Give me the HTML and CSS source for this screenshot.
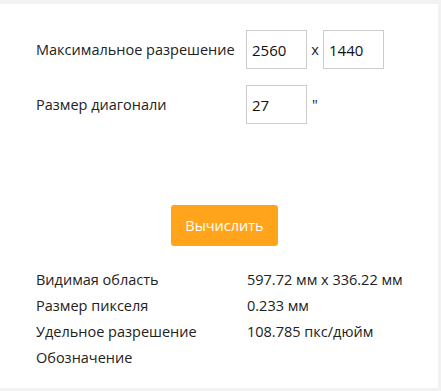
FILE: index.html
```html
<!DOCTYPE html>
<html lang="ru">
<head>
    <meta charset="UTF-8">
    <meta name="viewport" content="width=device-width, initial-scale=1.0">
    <title>Калькулятор разрешения</title>
    <link rel="stylesheet" href="styles.css">
</head>
<body>

    <div id="container">
        <div class="formRow">
            <label class="fieldLabel" for="resWidth">Максимальное разрешение</label>
            <input class="numInput" type="text" id="resWidth" value="2560">
            <span class="sep">x</span>
            <input class="numInput" type="text" id="resHeight" value="1440">
        </div>

        <div class="formRow">
            <label class="fieldLabel" for="diagonal">Размер диагонали</label>
            <input class="numInput" type="text" id="diagonal" value="27">
            <span class="sep">"</span>
        </div>

        <div class="actions">
            <button class="calcButton">Вычислить</button>
        </div>

        <div class="results">
            <div class="resultRow">
                <span class="resultName">Видимая область</span>
                <span class="resultValue">597.72 мм x 336.22 мм</span>
            </div>
            <div class="resultRow">
                <span class="resultName">Размер пикселя</span>
                <span class="resultValue">0.233 мм</span>
            </div>
            <div class="resultRow">
                <span class="resultName">Удельное разрешение</span>
                <span class="resultValue">108.785 пкс/дюйм</span>
            </div>
            <div class="resultRow">
                <span class="resultName">Обозначение</span>
                <span class="resultValue"></span>
            </div>
        </div>
    </div>

</body>
</html>
```

FILE: styles.css
```css
body {
    font-family: 'Open Sans', 'Segoe UI', Tahoma, sans-serif;
    font-size: 14.5px;
    color: #222;
    background-color: #f2f2f2;
    margin: 0;
    padding: 4px 3px 3px 0;
    height: 391px;
    box-sizing: border-box;
}

#container {
    background-color: #fff;
    height: 100%;
    box-sizing: border-box;
    padding: 26px 0 0 36px;
}

.formRow {
    display: flex;
    align-items: center;
    height: 39px;
    margin-bottom: 16px;
}

.fieldLabel {
    width: 210px;
}

.numInput {
    width: 61px;
    height: 39px;
    box-sizing: border-box;
    border: 1px solid #ccc;
    padding: 0 5px;
    font-family: inherit;
    font-size: 15px;
    color: #111;
    outline: none;
}

.sep {
    width: 16px;
    text-align: center;
}

.actions {
    display: flex;
    justify-content: center;
    padding: 65px 0 0 0;
    margin-left: -25px;
}

.calcButton {
    width: 107px;
    height: 41px;
    background-color: #ffa41b;
    color: #fff;
    border: none;
    border-radius: 3px;
    font-family: inherit;
    font-size: 14.5px;
    cursor: pointer;
}

.results {
    margin-top: 20px;
}

.resultRow {
    display: flex;
    height: 26px;
    align-items: center;
}

.resultName {
    width: 211px;
}
```
